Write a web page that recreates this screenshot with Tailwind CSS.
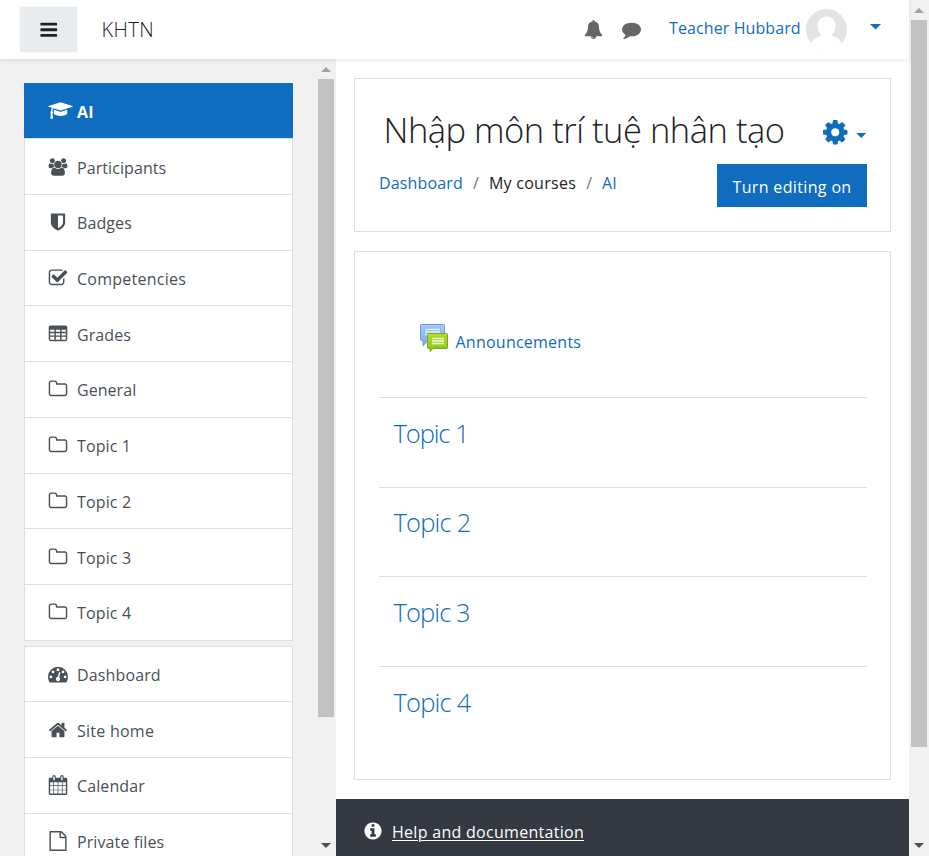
<!DOCTYPE html>
<html lang="vi">
<head>
<meta charset="utf-8">
<title>Nhập môn trí tuệ nhân tạo</title>
<script src="https://cdn.jsdelivr.net/npm/@tailwindcss/browser@4"></script>
</head>
<body class="flex h-[856px] w-[929px] overflow-hidden bg-white font-['Open_Sans','Noto_Sans',sans-serif] text-[16px] leading-6 text-[#1d2125]">

<!-- Icon symbols -->
<svg class="hidden">
  <symbol id="bars" viewBox="0 0 1792 1792"><path d="M1664 1344v128q0 26-19 45t-45 19h-1408q-26 0-45-19t-19-45v-128q0-26 19-45t45-19h1408q26 0 45 19t19 45zm0-512v128q0 26-19 45t-45 19h-1408q-26 0-45-19t-19-45v-128q0-26 19-45t45-19h1408q26 0 45 19t19 45zm0-512v128q0 26-19 45t-45 19h-1408q-26 0-45-19t-19-45v-128q0-26 19-45t45-19h1408q26 0 45 19t19 45z"/></symbol>
  <symbol id="folder" viewBox="0 0 1792 1792"><path d="M1600 1312v-704q0-40-28-68t-68-28h-704q-40 0-68-28t-28-68v-64q0-40-28-68t-68-28h-320q-40 0-68 28t-28 68v960q0 40 28 68t68 28h1216q40 0 68-28t28-68zm128-704v704q0 92-66 158t-158 66h-1216q-92 0-158-66t-66-158v-960q0-92 66-158t158-66h320q92 0 158 66t66 158v32h672q92 0 158 66t66 158z"/></symbol>
  <symbol id="cog" viewBox="0 0 1792 1792"><path d="M1152 896q0-106-75-181t-181-75-181 75-75 181 75 181 181 75 181-75 75-181zm512-109v222q0 12-8 23t-20 13l-185 28q-19 54-39 91 35 50 107 138 10 12 10 25t-9 23q-27 37-99 108t-94 71q-12 0-26-9l-138-108q-44 23-91 38-16 136-29 186-7 28-36 28h-222q-14 0-24.500-8.500t-11.500-21.500l-28-184q-49-16-90-37l-141 107q-10 9-25 9-14 0-25-11-126-114-165-168-7-10-7-23 0-12 8-23 15-21 51-66.500t54-70.500q-27-50-41-99l-183-27q-13-2-21-12.500t-8-23.500v-222q0-12 8-23t19-13l186-28q14-46 39-92-40-57-107-138-10-12-10-24 0-10 9-23 26-36 98.500-107.500t94.500-71.500q13 0 26 10l138 107q44-23 91-38 16-136 29-186 7-28 36-28h222q14 0 24.500 8.500t11.500 21.500l28 184q49 16 90 37l142-107q9-9 24-9 13 0 25 10 129 119 165 170 7 8 7 22 0 12-8 23-15 21-51 66.500t-54 70.500q26 50 41 98l183 28q13 2 21 12.500t8 23.500z"/></symbol>
  <symbol id="cap" viewBox="0 0 2304 1792"><path d="M1774 836l18 316q4 69-82 128t-235 93.500-323 34.500-323-34.500-235-93.500-82-128l18-316 574 181q22 7 48 7t48-7zm530-324q0 23-22 31l-1120 352q-4 1-10 1t-10-1l-652-206q-43 34-71 111.500t-34 178.500q63 36 63 109 0 69-58 107l58 433q2 14-8 25-9 11-24 11h-192q-15 0-24-11-10-11-8-25l58-433q-58-38-58-107 0-73 65-111 11-207 98-330l-333-104q-22-8-22-31t22-31l1120-352q4-1 10-1t10 1l1120 352q22 8 22 31z"/></symbol>
  <symbol id="users" viewBox="-64 0 2048 1792"><path d="M593 896q-162 5-265 128h-134q-82 0-138-40.500t-56-118.500q0-353 124-353 6 0 43.500 21t97.500 42.500 119 21.500q67 0 133-23-5 37-5 66 0 139 81 256zm1071 637q0 120-73 189.500t-194 69.500h-874q-121 0-194-69.500t-73-189.500q0-53 3.500-103.500t14-109 26.500-108.500 43-97.500 62-81 85.500-53.500 111.500-20q10 0 43 21.500t73 48 107 48 135 21.500 135-21.500 107-48 73-48 43-21.500q61 0 111.500 20t85.500 53.500 62 81 43 97.500 26.500 108.500 14 109 3.500 103.500zm-1024-1277q0 106-75 181t-181 75-181-75-75-181 75-181 181-75 181 75 75 181zm704 384q0 159-112.500 271.500t-271.500 112.500-271.500-112.500-112.500-271.500 112.500-271.500 271.500-112.500 271.500 112.500 112.500 271.500zm576 225q0 78-56 118.500t-138 40.500h-134q-103-123-265-128 81-117 81-256 0-29-5-66 66 23 133 23 59 0 119-21.500t97.500-42.500 43.500-21q124 0 124 353zm-128-609q0 106-75 181t-181 75-181-75-75-181 75-181 181-75 181 75 75 181z"/></symbol>
  <symbol id="comment" viewBox="0 0 1792 1792"><path d="M1792 896q0 174-120 321.500t-326 233-450 85.500q-70 0-145-8-198 175-460 242-49 14-114 22-17 2-30.500-9t-17.500-29v-1q-3-4-.5-12t2-10 4.500-9.500l6-9 7-8.500 8-9q7-8 31-34.500t34.500-38 31-39.500 32.500-51 27-59 26-76q-157-89-247.500-220t-90.500-281q0-174 120-321.500t326-233 450-85.500 450 85.500 326 233 120 321.500z"/></symbol>
  <symbol id="bell" viewBox="0 0 1792 1792"><path d="M912 1696q0-16-16-16-59 0-101.500-42.500t-42.500-101.500q0-16-16-16t-16 16q0 73 51.500 124.500t124.500 51.500q16 0 16-16zm816-288q0 52-38 90t-90 38h-448q0 106-75 181t-181 75-181-75-75-181h-448q-52 0-90-38t-38-90q50-42 91-88t85-119.500 74.500-158.500 50-206 19.500-260q0-152 117-282.500t307-158.500q-8-19-8-39 0-40 28-68t68-28 68 28 28 68q0 20-8 39 190 28 307 158.500t117 282.500q0 139 19.500 260t50 206 74.500 158.500 85 119.500 91 88z"/></symbol>
  <symbol id="home" viewBox="0 0 1792 1792"><path d="M1472 992v480q0 26-19 45t-45 19h-384v-384h-256v384h-384q-26 0-45-19t-19-45v-480q0-1 .5-3t.5-3l575-474 575 474q1 2 1 6zm223-69l-62 74q-8 9-21 11h-3q-13 0-21-7l-692-577-692 577q-12 8-24 7-13-2-21-11l-62-74q-8-10-7-23.500t11-21.500l719-599q32-26 76-26t76 26l244 204v-195q0-14 9-23t23-9h192q14 0 23 9t9 23v408l219 182q10 8 11 21.500t-7 23.500z"/></symbol>
  <symbol id="check" viewBox="0 0 1792 1792"><path d="M1472 930v318q0 119-84.500 203.500t-203.500 84.500h-832q-119 0-203.500-84.500t-84.500-203.500v-832q0-119 84.500-203.500t203.500-84.500h832q63 0 117 25 15 7 18 23 3 17-9 29l-49 49q-10 10-23 10-3 0-9-2-23-6-45-6h-832q-66 0-113 47t-47 113v832q0 66 47 113t113 47h832q66 0 113-47t47-113v-254q0-13 9-22l64-64q10-10 23-10 6 0 12 3 20 8 20 29zm231-489l-814 814q-24 24-57 24t-57-24l-430-430q-24-24-24-57t24-57l110-110q24-24 57-24t57 24l263 263 647-647q24-24 57-24t57 24l110 110q24 24 24 57t-24 57z"/></symbol>
  <symbol id="shield" viewBox="0 0 1792 1792"><path d="M1344 960v-640h-448v1137q119-63 213-137 235-184 235-360zm192-768v768q0 86-33.500 170.500t-83 150-118 127.500-126.500 103-121 77.500-89.500 49.500-42.500 20q-12 6-26 6t-26-6q-16-7-42.500-20t-89.500-49.500-121-77.500-126.500-103-118-127.500-83-150-33.500-170.500v-768q0-26 19-45t45-19h1152q26 0 45 19t19 45z"/></symbol>
  <symbol id="table" viewBox="0 0 1792 1792"><path fill-rule="evenodd" d="M224 128H1568Q1728 128 1728 288V1376Q1728 1536 1568 1536H224Q64 1536 64 1376V288Q64 128 224 128ZM192 512V704H576V512ZM704 512V704H1088V512ZM1216 512V704H1600V512ZM192 832V1024H576V832ZM704 832V1024H1088V832ZM1216 832V1024H1600V832ZM192 1152V1376Q192 1408 224 1408H576V1152ZM704 1152V1408H1088V1152ZM1216 1152V1408H1568Q1600 1408 1600 1376V1152Z"/></symbol>
  <symbol id="gauge" viewBox="0 0 1792 1792"><path fill-rule="evenodd" d="M896 256A896 896 0 0 1 1792 1152Q1792 1413 1651 1635Q1632 1664 1597 1664H195Q160 1664 141 1635Q0 1413 0 1152A896 896 0 0 1 896 256ZM256 1024a128 128 0 1 0 .1 0ZM448 576a128 128 0 1 0 .1 0ZM896 384a128 128 0 1 0 .1 0ZM1344 576a128 128 0 1 0 .1 0ZM1536 1024a128 128 0 1 0 .1 0ZM1004 1185L1105 803Q1111 777 1098 755T1058 725T1009 732T979 771L878 1153Q818 1158 771 1196.500T710 1297Q690 1374 730 1443T847 1532T993 1513T1082 1396Q1098 1336 1075.500 1278T1004 1185Z"/></symbol>
  <symbol id="calendar" viewBox="0 0 1792 1792"><path fill-rule="evenodd" d="M192 256H384V160Q384 0 544 0T704 160V256H1088V160Q1088 0 1248 0T1408 160V256H1600Q1728 256 1728 384V1664Q1728 1792 1600 1792H192Q64 1792 64 1664V384Q64 256 192 256ZM512 128Q480 128 480 160V448Q480 480 512 480H576Q608 480 608 448V160Q608 128 576 128ZM1216 128Q1184 128 1184 160V448Q1184 480 1216 480H1280Q1312 480 1312 448V160Q1312 128 1280 128ZM192 640V928H480V640ZM544 640V928H864V640ZM928 640V928H1248V640ZM1312 640V928H1600V640ZM192 992V1312H480V992ZM544 992V1312H864V992ZM928 992V1312H1248V992ZM1312 992V1312H1600V992ZM192 1376V1664H480V1376ZM544 1376V1664H864V1376ZM928 1376V1664H1248V1376ZM1312 1376V1664H1600V1376Z"/></symbol>
  <symbol id="file" viewBox="0 0 1792 1792"><path d="M1596 380q28 28 48 76t20 88v1152q0 40-28 68t-68 28h-1344q-40 0-68-28t-28-68v-1600q0-40 28-68t68-28h896q40 0 88 20t76 48zm-444-244v376h376q-10-29-22-41l-313-313q-12-12-41-22zm384 1528v-1024h-416q-40 0-68-28t-28-68v-416h-768v1536h1280z"/></symbol>
  <symbol id="info" viewBox="0 0 1792 1792"><path d="M1152 1376v-160q0-14-9-23t-23-9h-96v-512q0-14-9-23t-23-9h-320q-14 0-23 9t-9 23v160q0 14 9 23t23 9h96v320h-96q-14 0-23 9t-9 23v160q0 14 9 23t23 9h448q14 0 23-9t9-23zm-128-896v-160q0-14-9-23t-23-9h-192q-14 0-23 9t-9 23v160q0 14 9 23t23 9h192q14 0 23-9t9-23zm640 416q0 209-103 385.500t-279.500 279.500-385.500 103-385.500-103-279.500-279.500-103-385.500 103-385.500 279.500-279.500 385.500-103 385.500 103 279.500 279.500 103 385.500z"/></symbol>
</svg>

<div class="flex w-[909px] flex-col">
  <!-- Top bar -->
  <header class="relative z-10 flex h-[59px] shrink-0 items-start bg-white shadow-[0_2px_4px_rgba(0,0,0,0.08)]">
    <button class="mt-[7px] ml-[20px] flex h-[45px] w-[57px] items-center justify-center bg-[#e9ecef] outline outline-[#f8f9fa]"><svg class="size-[19.5px] fill-[#1d2125]"><use href="#bars"/></svg></button>
    <span class="mt-[18px] ml-[24.500px] text-[20px] font-[350] tracking-[0.4px]">KHTN</span>
    <div class="ml-auto flex items-start">
      <svg class="mt-[20px] size-[19px] fill-[#666]"><use href="#bell"/></svg>
      <svg class="mt-[20px] ml-[18.500px] size-[19px] fill-[#666]"><use href="#comment"/></svg>
      <a class="mt-[16px] ml-[28.500px] w-[137px] tracking-[0.1px] whitespace-nowrap text-[#0f6cbf]">Teacher Hubbard</a>
      <svg class="mt-[9px] size-[41px]" viewBox="0 0 41 41"><defs><clipPath id="av"><circle cx="20.500" cy="20.500" r="20.500"/></clipPath></defs><g clip-path="url(#av)"><rect width="41" height="41" fill="#e3e3e3"/><path fill="#fff" d="M20.500 7.500c5.500 0 9 4 9 9.500 0 4-1.500 7-4 9 1 1.500 6 2 8.500 5.500 1.500 2 2 4 2.500 6V41H4.500v-3.500c.5-2 1-4 2.500-6 2.500-3.500 7.500-4 8.500-5.500-2.500-2-4-5-4-9 0-5.500 3.500-9.500 9-9.500z"/></g></svg>
      <svg class="mt-[24px] mr-[28px] ml-[23px] h-[5.500px] w-[11px] fill-[#0f6cbf]" viewBox="0 0 11 5.500"><path d="M0 0h11L5.500 5.500z"/></svg>
    </div>
  </header>

  <div class="flex min-h-0 flex-1">
    <!-- Navigation drawer -->
    <aside class="flex w-[336px] shrink-0 overflow-hidden bg-[#f1f1f1]">
      <nav id="nav" class="ml-[24px] flex w-[269px] shrink-0 flex-col pt-[24px] text-[#495057]">
        <a class="flex h-[55px] shrink-0 items-start bg-[#0f6cbf] pt-[19px] pl-[24px] font-bold text-white"><svg class="-mt-px h-[19px] w-[25px] fill-white"><use href="#cap"/></svg><span class="-mt-[2px] ml-[4px] tracking-[0.3px]">AI</span></a>
      </nav>
      <div class="ml-auto flex w-[20px] flex-col items-center bg-[#f1f1f1] pt-[8px]">
        <svg class="h-[5px] w-[10px] fill-[#a3a3a3]" viewBox="0 0 10 5"><path d="M0 5h10L5 0z"/></svg>
        <div class="mt-[7px] h-[638px] w-[16px] bg-[#c1c1c1]"></div>
        <svg class="mt-auto mb-[8px] h-[5px] w-[10px] fill-[#505050]" viewBox="0 0 10 5"><path d="M0 0h10L5 5z"/></svg>
      </div>
    </aside>

    <!-- Course content -->
    <main class="flex w-[573px] flex-col pt-[19px]">
      <section class="mx-[18px] h-[154px] shrink-0 border border-[#dedede] pr-[23px] pl-[24px]">
        <div class="flex items-start">
          <h1 class="mt-[29px] ml-[4.500px] text-[34.500px] leading-[44px] font-light tracking-[-0.48px] whitespace-nowrap">Nhập môn trí tuệ nhân tạo</h1>
          <svg class="mt-[39px] ml-auto size-[28.500px] fill-[#0f6cbf]"><use href="#cog"/></svg>
          <svg class="mt-[54px] mr-[0.500px] ml-[7px] h-[5px] w-[10.500px] fill-[#0f6cbf]" viewBox="0 0 10 5"><path d="M0 0h10L5 5z"/></svg>
        </div>
        <div class="mt-[12px] flex items-start justify-between">
          <ol class="mt-[7px] flex whitespace-pre text-[#6c757d]">
            <li class="tracking-[0.15px] text-[#0f6cbf]">Dashboard</li><li class="w-[26px] text-center">/</li><li class="tracking-[0.27px] text-[#1d2125]">My courses</li><li class="w-[26px] text-center">/</li><li class="text-[#0f6cbf]">AI</li>
          </ol>
          <button class="h-[43px] w-[150px] bg-[#0f6cbf] pt-[2px] tracking-[0.35px] whitespace-nowrap text-white">Turn editing on</button>
        </div>
      </section>

      <section class="mx-[18px] mt-[19px] h-[529px] shrink-0 border border-[#dedede] pr-[23px] pl-[24px]">
        <div class="flex h-[145px] items-start pt-[71px] pl-[40px]">
          <svg class="size-[30px]" viewBox="0 0 30 30">
            <defs>
              <linearGradient id="gb" x2="0" y2="1"><stop stop-color="#a9cdfb"/><stop offset="1" stop-color="#7ba6ee"/></linearGradient>
              <linearGradient id="gg" x2="0" y2="1"><stop stop-color="#b4e313"/><stop offset="1" stop-color="#85c408"/></linearGradient>
            </defs>
            <path d="M2.500 1.500h22q1 0 1 1v14q0 1-1 1H9l-5 5.500v-5.500H2.500q-1 0-1-1v-14q0-1 1-1z" fill="url(#gb)" stroke="#7299df"/>
            <path d="M5 4.500h17v10H5z" fill="#8fbaf7"/>
            <path d="M6 6.500h15M6 9h15M6 11.500h8" stroke="#e6f1ff" stroke-width="1.300"/>
            <path d="M9.500 10.500h18q1 0 1 1v13q0 1-1 1H14l-3 3v-3H9.500q-1 0-1-1v-13q0-1 1-1z" fill="url(#gg)" stroke="#79a52c"/>
            <path d="M12 13.500h14v9H12z" fill="#a0d040"/>
            <path d="M13 15.500h12M13 18h12M13 20.500h12" stroke="#f2fbd2" stroke-width="1.300"/>
          </svg>
          <a class="mt-[6.500px] ml-[6.500px] tracking-[0.24px] text-[#0f6cbf]">Announcements</a>
        </div>
        <div id="topics" class="text-[25.500px] leading-[36px] font-light text-[#0f6cbf]">
          <h3 class="h-[90px] border-t border-[#dedede] pt-[16.500px] pl-[14.500px] tracking-[-1.1px]">Topic 1</h3>
          <h3 class="h-[89px] border-t border-[#dedede] pt-[16px] pl-[14.500px] tracking-[-0.8px]">Topic 2</h3>
          <h3 class="h-[90px] border-t border-[#dedede] pt-[16.500px] pl-[14.500px] tracking-[-0.9px]">Topic 3</h3>
          <h3 class="border-t border-[#dedede] pt-[16.500px] pl-[14.500px] tracking-[-0.8px]">Topic 4</h3>
        </div>
      </section>

      <footer class="mt-[19px] flex flex-1 items-start bg-[#353941] pl-[27px]">
        <svg class="mt-[22px] size-[20px] fill-white"><use href="#info"/></svg>
        <a class="mt-[20.500px] ml-[9px] tracking-[0.29px] text-white underline decoration-1 underline-offset-2">Help and documentation</a>
      </footer>
    </main>
  </div>
</div>

<!-- Page scrollbar -->
<div class="flex w-[20px] flex-col items-center bg-[#f1f1f1] pt-[8px]">
  <svg class="h-[5px] w-[10px] fill-[#a3a3a3]" viewBox="0 0 10 5"><path d="M0 5h10L5 0z"/></svg>
  <div class="mt-[7px] h-[727px] w-[16px] bg-[#c1c1c1]"></div>
  <svg class="mt-auto mb-[8px] h-[5px] w-[10px] fill-[#505050]" viewBox="0 0 10 5"><path d="M0 0h10L5 5z"/></svg>
</div>

<script>
  // Drawer entries: [icon, label, row height, letter spacing, top padding]
  const course = [
    ['users', 'Participants', 56, 0.08, 16.5], ['shield', 'Badges', 56, 0.1, 15.5], ['check', 'Competencies', 55, 0.25, 15.5],
    ['table', 'Grades', 56, 0.1, 16.5], ['folder', 'General', 56, 0.05, 15.5], ['folder', 'Topic 1', 56, 0.1, 15.5],
    ['folder', 'Topic 2', 55, 0.15, 15.5], ['folder', 'Topic 3', 56, 0.15, 16.5], ['folder', 'Topic 4', 56, 0.15, 15.5]
  ];
  const site = [
    ['gauge', 'Dashboard', 55, 0.13, 15.5], ['home', 'Site home', 56, 0.25, 16.5],
    ['calendar', 'Calendar', 56, 0.1, 15.5], ['file', 'Private files', 56, 0.1, 15.5]
  ];
  const group = (rows, cls) => `<div class="${cls}">` + rows.map(([icon, label, h, ls, pt]) => `
    <a class="flex items-start border-t border-[#dedede] pl-[23px]" style="height:${h}px;padding-top:${pt}px">
      <svg class="mt-[1px] size-[20px] fill-[#495057]"><use href="#${icon}"/></svg>
      <span class="ml-[9px]" style="letter-spacing:${ls}px">${label}</span>
    </a>`).join('') + '</div>';
  document.getElementById('nav').insertAdjacentHTML('beforeend',
    group(course, 'shrink-0 border-x border-b border-[#dedede] bg-white') +
    group(site, 'mt-[5px] shrink-0 border-x border-[#dedede] bg-white'));
</script>
</body>
</html>
